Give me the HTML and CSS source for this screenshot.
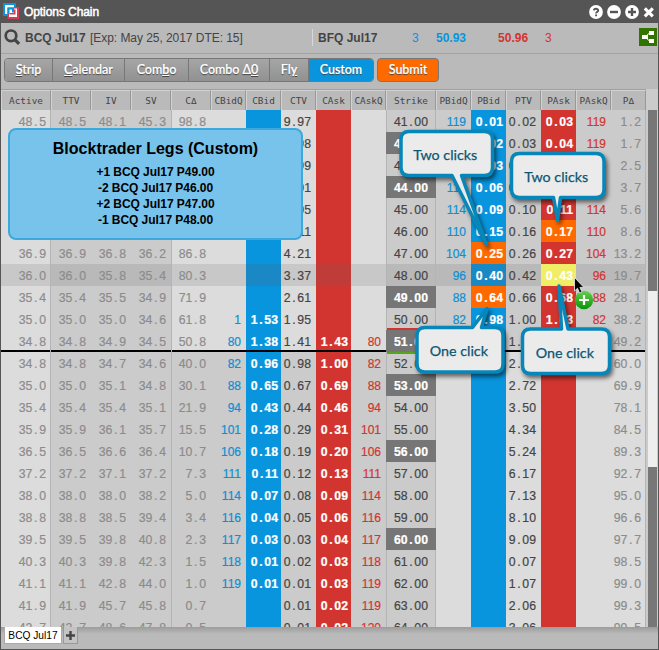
FILE: index.html
```html
<!DOCTYPE html>
<html lang="en">
<head>
<meta charset="utf-8">
<title>Options Chain</title>
<link rel="stylesheet" href="styles.css">
</head>
<body>
<div class="window">
  <header class="titlebar">
    <svg class="logo" width="16" height="16" viewBox="0 0 16 16">
      <rect x="4.500" y="4" width="11.500" height="12" fill="#d83a55"/>
      <rect x="6" y="5.500" width="8" height="8.500" fill="#fff"/>
      <path d="M0 0h13v4H11V2H2v9h3v2H0z" fill="#0895dd"/>
      <path d="M2 2h9v2.500H4.500V11H2z" fill="#fff"/>
      <path d="M4.500 4.500H11V9.500H9V6.500H6.500V11h-2z" fill="#0895dd"/>
      <path d="M6.500 10h4.500V6.500h1.500v5h-6z" fill="#d83a55"/>
    </svg>
    <h1>Options Chain</h1>
    <div class="controls">
      <svg width="14" height="14" viewBox="0 0 14 14"><circle cx="7" cy="7" r="6.900" fill="#fff"/><path d="M4.900 5.400C5 3.300 9.200 3.200 9.200 5.400 9.200 6.900 7.100 6.700 7.100 8.500M7.100 9.600v1.700" fill="none" stroke="#555" stroke-width="1.900"/></svg>
      <svg width="14" height="14" viewBox="0 0 14 14"><circle cx="7" cy="7" r="6.900" fill="#fff"/><path d="M3 7h8" stroke="#555" stroke-width="2.400"/></svg>
      <svg width="14" height="14" viewBox="0 0 14 14"><circle cx="7" cy="7" r="6.900" fill="#fff"/><path d="M3 7h8M7 3v8" stroke="#555" stroke-width="2.400"/></svg>
      <svg width="12" height="14" viewBox="0 0 12 14"><path d="M1.800 3.300l8 8M9.800 3.300l-8 8" stroke="#fff" stroke-width="3.200"/></svg>
    </div>
  </header>

  <div class="search">
    <svg class="lens" width="17" height="17" viewBox="0 0 17 17"><circle cx="7" cy="6.800" r="5.300" fill="none" stroke="#444" stroke-width="2.700"/><path d="M10.500 10.300l4.600 4.600" stroke="#444" stroke-width="3.200"/></svg>
    <b class="symbol">BCQ Jul17</b>
    <span class="expiry">[Exp: May 25, 2017 DTE: 15]</span>
    <div class="future">
      <b class="fname">BFQ Jul17</b>
      <span class="bid qty">3</span><b class="bid">50.93</b>
      <b class="ask">50.96</b><span class="ask aqty">3</span>
    </div>
    <svg class="link" width="18" height="18" viewBox="0 0 18 18"><rect width="18" height="18" fill="#337300"/><path d="M3 7h6v4H3zM10 3h5v4h-5zM10 11h5v4h-5z" fill="#fff"/><path d="M8.500 9V6.500L11 5M8.500 9v2.500L11 13" fill="none" stroke="#fff" stroke-width="1"/></svg>
  </div>

  <div class="toolbar">
    <div class="group">
      <button class="strip"><u>S</u>trip</button><button class="calendar"><u>C</u>alendar</button><button class="combo">Com<u>b</u>o</button><button class="delta">Combo Δ<u>0</u></button><button class="fly">Fl<u>y</u></button><button class="custom">Custom</button>
    </div>
    <button class="submit">Submit</button>
  </div>

  <div class="main">
    <div class="grid">
      <div class="row head" id="head"></div>
      <div class="rows" id="rows"></div>
    </div>
    <div class="scroll"><div class="thumb"></div></div>
  </div>

  <footer class="tabs">
    <div class="tab">BCQ Jul17</div>
    <div class="add"><svg width="9" height="9" viewBox="0 0 9 9"><path d="M0 4.500h9M4.500 0v9" stroke="#444" stroke-width="2.400"/></svg></div>
  </footer>

  <section class="legs">
    <h2>Blocktrader Legs (Custom)</h2>
    <p>+1 BCQ Jul17 P49.00</p>
    <p>-2 BCQ Jul17 P46.00</p>
    <p>+2 BCQ Jul17 P47.00</p>
    <p>-1 BCQ Jul17 P48.00</p>
  </section>

  <svg class="callouts" width="659" height="650" viewBox="0 0 659 650">
    <defs>
      <linearGradient id="green" x1="0" y1="0" x2="0" y2="1"><stop offset="0" stop-color="#64d04c"/><stop offset="1" stop-color="#0b9408"/></linearGradient>
    </defs>
    <g class="bubble">
      <path d="M409 131.500H484.500Q492.500 131.500 492.500 139.500V167.500Q492.500 175.500 484.500 175.500H461.500L486.500 244.500 452 175.500H409Q401 175.500 401 167.500V139.500Q401 131.500 409 131.500Z"/>
      <path d="M519.500 153.500H596Q604 153.500 604 161.500V189.500Q604 197.500 596 197.500H560.500L557.500 220 553.500 197.500H519.500Q511.500 197.500 511.500 189.500V161.500Q511.500 153.500 519.500 153.500Z"/>
      <path d="M425 327.500H472.500L487 308.500 481.500 327.500H495Q503 327.500 503 335.500V364Q503 372 495 372H425Q417 372 417 364V335.500Q417 327.500 425 327.500Z"/>
      <path d="M530.500 329H561.500L559 286 568 329H601.500Q609.500 329 609.500 337V365.500Q609.500 373.500 601.500 373.500H530.500Q522.500 373.500 522.500 365.500V337Q522.500 329 530.500 329Z"/>
    </g>
    <g class="label">
      <text x="445.300" y="160">Two clicks</text>
      <text x="556.300" y="182">Two clicks</text>
      <text x="458.800" y="356">One click</text>
      <text x="564.800" y="358">One click</text>
    </g>
    <circle cx="584" cy="300" r="9.200" fill="url(#green)"/>
    <path d="M584 295v10M579 300h10" stroke="#fff" stroke-width="2.200"/>
    <path d="M574.500 277.500v13.500l3-2.700 2.100 4.800 2.400-1.100-2.100-4.600h4z" fill="#000" stroke="#eee" stroke-width=".8"/>
  </svg>
</div>
<script src="script.js"></script>
</body>
</html>
```
FILE: styles.css
```css
* { box-sizing: border-box; }

body {
  margin: 0;
  font-family: "Liberation Sans", Arial, sans-serif;
  color: #444;
}

.window {
  position: relative;
  width: 659px;
  height: 650px;
  border: 1px solid #555;
  border-top: 0;
  background: #bababa;
  overflow: hidden;
  display: flex;
  flex-direction: column;
}

h1, h2, p { margin: 0; }

.titlebar {
  flex: none;
  height: 23px;
  background: #555;
  display: flex;
  align-items: center;
  padding: 0 3px 0 2px;
}
.logo { margin-top: -1px; }
.titlebar h1 {
  margin-left: 5px;
  color: #fff;
  font-size: 12px;
  font-weight: 400;
  -webkit-text-stroke: .5px #fff;
  letter-spacing: -.08px;
}
.controls { margin-left: auto; display: flex; gap: 4px; }

.search {
  flex: none;
  height: 31px;
  border-bottom: 1px solid #a3a3a3;
  display: flex;
  align-items: center;
  padding: 0 1px 2px 3px;
  font-size: 12px;
  white-space: nowrap;
}
.search b, .search span { position: relative; top: 1px; }
.symbol { margin-left: 4px; width: 65px; font-size: 12px; }
.expiry { width: 222px; font-size: 12px; letter-spacing: -.05px; }
.future {
  display: flex;
  align-items: center;
  height: 17px;
  border-left: 1px solid #d8d8d8;
  padding-left: 5px;
  font-size: 12px;
}
.fname { width: 94px; }
.qty { width: 24px; }
.future b.ask { margin-left: 32px; }
.aqty { margin-left: 17px; }
.bid { color: #0895dd; }
.ask { color: #d23530; }
.link { margin-left: auto; }

.toolbar {
  flex: none;
  height: 35px;
  padding: 4px 3px 0;
  display: flex;
  gap: 4px;
}
.toolbar button {
  height: 24px;
  padding: 0 0 1px;
  border: 0;
  border-right: 1px solid #777;
  background: linear-gradient(#a6a6a6, #919191);
  color: #fff;
  font: 600 12.5px Lato, sans-serif;
  letter-spacing: -.05px;
  -webkit-text-stroke: .15px #fff;
  text-shadow: 0 1px 1px #444;
}
.group {
  display: flex;
  height: 24px;
  border: 1px solid #777;
  border-radius: 4px;
  overflow: hidden;
}
.group button { height: 22px; }
.toolbar u { text-underline-offset: 1px; }
.strip { width: 48px; }
.calendar { width: 72px; }
.combo { width: 64px; }
.delta { width: 81px; }
.fly { width: 39px; }
.toolbar .custom { width: 64px; border: 0; background: #0895dd; }
.toolbar .submit {
  width: 62px;
  margin-left: -1px;
  border: 1px solid #777;
  border-radius: 4px;
  background: #ff6a00;
}

.main { flex: none; height: 538px; display: flex; }
.grid { width: 645px; display: flex; flex-direction: column; overflow: hidden; }
.row {
  display: grid;
  grid-template-columns: 50px 40px 40px 40px 40px 35px 35px 35px 35px 35px 50px 35px 35px 35px 35px 35px 35px;
  height: 22px;
}
.head {
  flex: none;
  height: 21px;
  border-top: 1px solid #a0a0a0;
  font: 9.4px "DejaVu Sans Mono", monospace;
  text-align: center;
}
.head div {
  border-left: 1px solid #d2d2d2;
  border-right: 1px solid #989898;
  border-top: 1px solid #d2d2d2;
  border-bottom: 1px solid #a8a8a8;
  line-height: 19px;
  display: flex;
  justify-content: center;
  white-space: nowrap;
}
.rows { flex: none; height: 517px; overflow: hidden; }

.cell {
  display: flex;
  justify-content: flex-end;
  overflow: hidden;
  padding-right: 5px;
  font-size: 12.25px;
  line-height: 24px;
  white-space: pre;
  background: #dcdcdc;
  -webkit-text-stroke: .2px;
}
.dot { width: .5556em; text-align: center; }
.active, .ttv, .iv, .sv, .cdelta, .pdelta { color: #8c8c8c; }
.active { border-right: 1px solid #b4b4b4; padding-right: 4px; }
.ttv, .iv, .sv, .strike { background: #cbcbcb; }
.cdelta { border-left: 1px solid #b4b4b4; }
.strike { border-left: 1px solid #b4b4b4; border-right: 1px solid #b4b4b4; padding-right: 7px; }
.pdelta { border-right: 1px solid #b4b4b4; padding-right: 4px; }
.cbidq, .pbidq { color: #0d8fd2; font-size: 12px; }
.caskq, .paskq { color: #d23530; font-size: 12px; }
.cbid, .pbid, .cask, .pask { color: #fff; font-weight: 700; padding-right: 3px; }
.cbid, .pbid { background: #0895dd; }
.cask, .pask { background: #d23530; }

.below .cdelta, .below .cbidq, .below .ctv, .below .caskq,
.above .pbidq, .above .ptv, .above .paskq, .above .pdelta { background: #cbcbcb; }

.hover .cell { background: #c8c8c8; }
.hover .ttv, .hover .iv, .hover .sv, .hover .strike,
.hover .pbidq, .hover .ptv, .hover .paskq, .hover .pdelta { background: #b9b9b9; }
.hover .cbid, .hover .pbid { background: #1a88c4; }
.hover .cask { background: #c03c38; }
.hover .pask { background: #f0ee66; }

.row .dark { background: #767676; border-color: #767676; color: #fff; font-weight: 700; }
.row .picked { background: #ff6a00; }
.atm .cell:not(.strike) { box-shadow: inset 0 -2px #000; }
.r50 .strike { box-shadow: inset 0 -2px #d23530; }
.r52 .strike { box-shadow: inset 0 2px #57a51c; }

.scroll {
  width: 12px;
  padding: 202px 0 0 2px;
  background: linear-gradient(#777, #777) 2px 21px / 9px 100% no-repeat, #cbcbcb;
}
.thumb { width: 9px; height: 176px; background: #eee; }

.tabs {
  flex: 1;
  display: flex;
  align-items: flex-start;
  gap: 1px;
  padding-left: 3px;
  background: linear-gradient(#9c9c9c, #bababa 7px);
}
.tab {
  width: 58px;
  height: 17px;
  background: #fff;
  border: 1px solid #aaa;
  border-top: 0;
  color: #000;
  font-size: 10.2px;
  line-height: 17px;
  text-align: center;
}
.add {
  width: 15px;
  height: 17px;
  border: 1px solid #999;
  border-top: 0;
  background: #c4c4c4;
  display: flex;
  align-items: center;
  justify-content: center;
}

.legs {
  position: absolute;
  left: 7px;
  top: 128px;
  width: 295px;
  height: 112px;
  padding-top: 9px;
  border: 2px solid #3ba9dc;
  border-radius: 8px;
  background: #78c3eb;
  color: #000;
  text-align: center;
}
.legs h2 { font-size: 16px; line-height: 19px; margin-bottom: 6px; }
.legs p { font-size: 12px; font-weight: 700; line-height: 16px; letter-spacing: -.05px; }

.callouts { position: absolute; left: -1px; top: 0; }
.bubble path {
  fill: #ebebeb;
  stroke: #0787b9;
  stroke-width: 3.5;
  stroke-linejoin: round;
  filter: drop-shadow(2px 3px 2px rgba(0, 0, 0, .55));
}
.label { font: 400 14.3px Lato, sans-serif; fill: #0b5773; stroke: #0b5773; stroke-width: .25; text-anchor: middle; }
```
FILE: script.js
```js
const columns = ["active", "ttv", "iv", "sv", "cdelta", "cbidq", "cbid", "ctv", "cask", "caskq",
  "strike", "pbidq", "pbid", "ptv", "pask", "paskq", "pdelta"];
const titles = ["Active", "TTV", "IV", "SV", "CΔ", "CBidQ", "CBid", "CTV", "CAsk", "CAskQ",
  "Strike", "PBidQ", "PBid", "PTV", "PAsk", "PAskQ", "PΔ"];

// One line per strike; "-" marks an empty cell.
const data = `
48.5 48.5 48.1 45.3 98.8 - - 9.97 - - 41.00 119 0.01 0.02 0.03 119 1.2
46.2 46.2 45.9 43.5 98.3 - - 8.98 - - 42.00 119 0.02 0.03 0.04 119 1.7
44.0 44.0 43.8 41.8 97.5 - - 7.99 - - 43.00 118 0.03 0.05 0.06 116 2.5
42.0 42.0 41.8 40.2 96.3 - - 7.01 - - 44.00 117 0.06 0.07 0.08 116 3.7
40.1 40.1 40.0 38.7 94.4 - - 6.05 - - 45.00 114 0.09 0.10 0.11 114 5.6
38.4 38.4 38.3 37.4 91.4 - - 5.11 - - 46.00 110 0.15 0.16 0.17 110 8.6
36.9 36.9 36.8 36.2 86.8 - - 4.21 - - 47.00 104 0.25 0.26 0.27 104 13.2
36.0 36.0 35.8 35.4 80.3 - - 3.37 - - 48.00 96 0.40 0.42 0.43 96 19.7
35.4 35.4 35.5 34.9 71.9 - - 2.61 - - 49.00 88 0.64 0.66 0.68 88 28.1
35.0 35.0 35.0 34.6 61.8 1 1.53 1.95 - - 50.00 82 0.98 1.00 1.03 82 38.2
34.8 34.8 34.9 34.5 50.8 80 1.38 1.41 1.43 80 51.00 - - 1.46 - - 49.2
34.8 34.8 34.7 34.6 40.0 82 0.96 0.98 1.00 82 52.00 - - 2.03 - - 60.0
35.0 35.0 35.1 34.8 30.1 88 0.65 0.67 0.69 88 53.00 - - 2.72 - - 69.9
35.4 35.4 35.4 35.1 21.9 94 0.43 0.44 0.46 94 54.00 - - 3.50 - - 78.1
35.9 35.9 36.1 35.7 15.5 101 0.28 0.29 0.31 101 55.00 - - 4.34 - - 84.5
36.5 36.5 36.6 36.4 10.7 106 0.18 0.19 0.20 106 56.00 - - 5.24 - - 89.3
37.2 37.2 37.1 37.2 7.3 111 0.11 0.12 0.13 111 57.00 - - 6.17 - - 92.7
38.0 38.0 38.0 38.2 5.0 114 0.07 0.08 0.09 114 58.00 - - 7.13 - - 95.0
38.8 38.8 38.5 39.4 3.4 116 0.04 0.05 0.06 116 59.00 - - 8.10 - - 96.6
39.5 39.5 39.8 40.8 2.3 117 0.03 0.03 0.04 117 60.00 - - 9.09 - - 97.7
40.3 40.3 39.8 42.3 1.5 118 0.01 0.02 0.03 118 61.00 - - 0.07 - - 98.5
41.1 41.1 42.8 44.0 1.0 119 0.01 0.01 0.03 119 62.00 - - 1.07 - - 99.0
41.9 41.9 45.7 45.8 0.7 - - 0.01 0.02 119 63.00 - - 2.06 - - 99.3
42.7 42.7 48.6 47.8 0.5 - - 0.01 0.02 120 64.00 - - 3.06 - - 99.5`.trim().split("\n");

const darkStrikes = [42, 44, 49, 51, 53, 56, 60];
const picked = ["pbid47", "pbid49", "pask46"];

document.getElementById("head").innerHTML = titles.map(t => `<div>${t}</div>`).join("");

document.getElementById("rows").innerHTML = data.map((line, i) => {
  const strike = 41 + i;
  const cls = ["row", strike <= 51 ? "above" : "below", "r" + strike];
  if (strike === 48) cls.push("hover");
  if (strike === 51) cls.push("atm");
  const cells = line.split(" ").map((value, c) => {
    const name = columns[c];
    let k = "cell " + name;
    if (name === "strike" && darkStrikes.includes(strike)) k += " dark";
    if (picked.includes(name + strike)) k += " picked";
    const text = value === "-" ? "" : value.replace(".", '<span class="dot">.</span>');
    return `<div class="${k}">${text}</div>`;
  }).join("");
  return `<div class="${cls.join(" ")}">${cells}</div>`;
}).join("");
```
